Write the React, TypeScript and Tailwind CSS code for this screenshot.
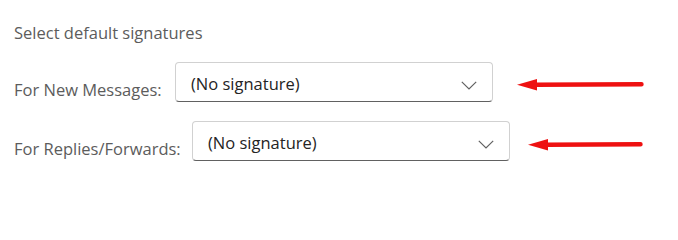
function Arrow({width}: {width: number}) {
  return (
    <svg width={width} height="12" viewBox={`0 0 ${width} 12`} className="block">
      <line x1="18" y1="5.8" x2={width - 2.5} y2="5.2" stroke="#ee1111" strokeWidth="4.4" strokeLinecap="round" />
      <path d="M0 5.8 L20 0 L20 11.6 Z" fill="#ee1111" />
    </svg>
  )
}

function SignatureSelect({value}: {value: string}) {
  return (
    <div className="flex h-[40px] w-[318px] shrink-0 items-center justify-between rounded-[4px] border border-[#d1d1d1] border-b-[#616161] pl-[15px] pr-[15px] pt-[3px]">
      <span className="text-[16.5px] leading-[22px] text-[#242424]">{value}</span>
      <svg width="16" height="9" viewBox="0 0 16 9" className="mt-[3px]">
        <path d="M0.8 0.8 L8 8 L15.2 0.8" fill="none" stroke="#616161" strokeWidth="1.2" />
      </svg>
    </div>
  )
}

export default function App() {
  return (
    <div className="h-[205px] w-[678px] bg-white pl-[14px] pt-[22px] font-['Open_Sans',sans-serif]">
      <h2 className="text-[16.5px] leading-[22px] text-[#5c5c5c]">Select default signatures</h2>

      <div className="mt-[18px] flex flex-col gap-[19px]">
        <div className="flex">
          <label className="mt-[16.5px] w-[161px] shrink-0 whitespace-nowrap text-[16.5px] leading-[22px] text-[#5c5c5c]">For New Messages:</label>
          <SignatureSelect value="(No signature)" />
          <div className="ml-[24px] mt-[17px]">
            <Arrow width={127} />
          </div>
        </div>
        <div className="flex">
          <label className="mt-[16.5px] w-[178px] shrink-0 whitespace-nowrap text-[16.5px] leading-[22px] text-[#5c5c5c]">For Replies/Forwards:</label>
          <SignatureSelect value="(No signature)" />
          <div className="ml-[18px] mt-[18px]">
            <Arrow width={115} />
          </div>
        </div>
      </div>
    </div>
  )
}
